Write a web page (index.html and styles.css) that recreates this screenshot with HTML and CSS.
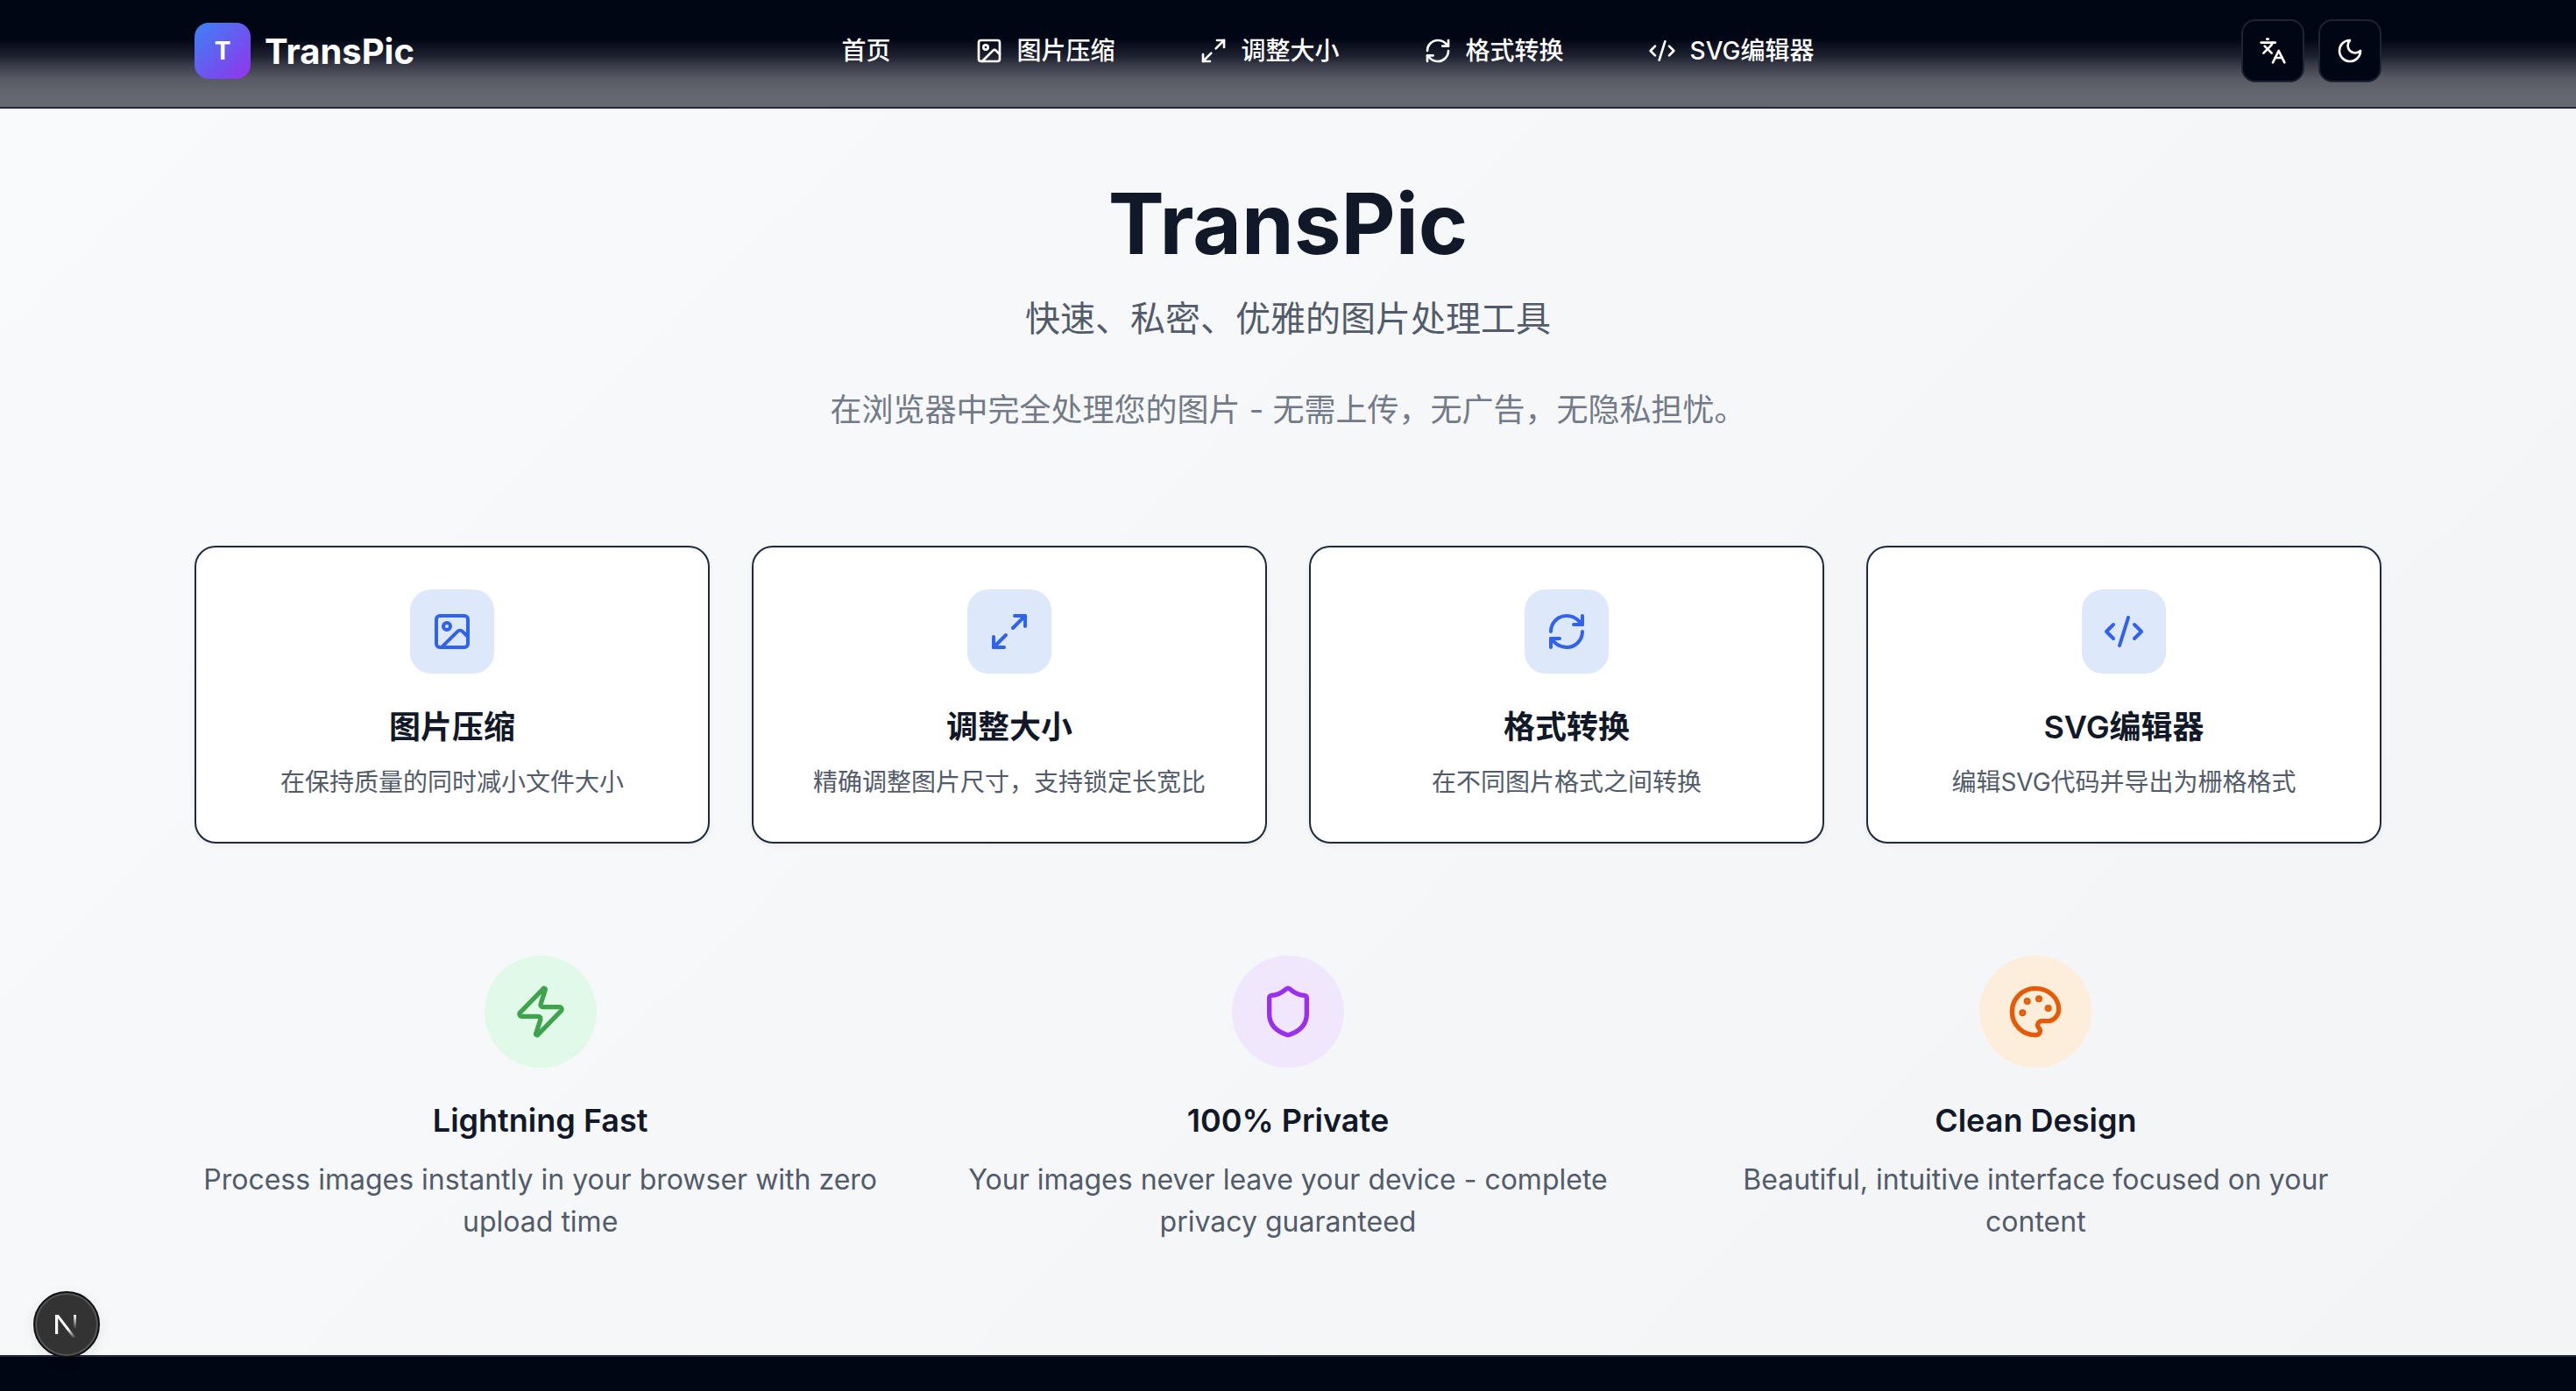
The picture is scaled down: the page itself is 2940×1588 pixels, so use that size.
FILE: index.html
```html
<!DOCTYPE html>
<html lang="zh-CN">
<head>
    <meta charset="UTF-8">
    <meta name="viewport" content="width=device-width, initial-scale=1.0">
    <title>TransPic</title>
    <link rel="stylesheet" href="styles.css">
</head>
<body>
    <header class="site-header">
        <div class="header-inner">
            <a class="brand" href="#">
                <span class="brand-mark">T</span>
                <span class="brand-name">TransPic</span>
            </a>
            <nav class="main-nav">
                <a class="nav-link" href="#">首页</a>
                <a class="nav-link" href="#">
                    <svg class="icon nav-icon" viewBox="0 0 24 24"><rect x="3" y="3" width="18" height="18" rx="2"/><circle cx="9" cy="9" r="2"/><path d="m21 15-3.086-3.086a2 2 0 0 0-2.828 0L6 21"/></svg>
                    图片压缩
                </a>
                <a class="nav-link" href="#">
                    <svg class="icon nav-icon" viewBox="0 0 24 24"><path d="M15 3h6v6"/><path d="m21 3-7 7"/><path d="m3 21 7-7"/><path d="M9 21H3v-6"/></svg>
                    调整大小
                </a>
                <a class="nav-link" href="#">
                    <svg class="icon nav-icon" viewBox="0 0 24 24"><path d="M3 12a9 9 0 0 1 9-9 9.75 9.75 0 0 1 6.74 2.74L21 8"/><path d="M21 3v5h-5"/><path d="M21 12a9 9 0 0 1-9 9 9.75 9.75 0 0 1-6.74-2.74L3 16"/><path d="M8 16H3v5"/></svg>
                    格式转换
                </a>
                <a class="nav-link" href="#">
                    <svg class="icon nav-icon" viewBox="0 0 24 24"><path d="m18 16 4-4-4-4"/><path d="m6 8-4 4 4 4"/><path d="m14.5 4-5 16"/></svg>
                    SVG编辑器
                </a>
            </nav>
            <div class="header-actions">
                <button class="icon-button" type="button">
                    <svg class="icon nav-icon" viewBox="0 0 24 24"><path d="m5 8 6 6"/><path d="m4 14 6-6 2-3"/><path d="M2 5h12"/><path d="M7 2h1"/><path d="m22 22-5-10-5 10"/><path d="M14 18h6"/></svg>
                </button>
                <button class="icon-button" type="button">
                    <svg class="icon nav-icon" viewBox="0 0 24 24"><path d="M12 3a6 6 0 0 0 9 9 9 9 0 1 1-9-9Z"/></svg>
                </button>
            </div>
        </div>
    </header>

    <main class="content">
        <section class="hero">
            <h1>TransPic</h1>
            <p class="hero-tagline">快速、私密、优雅的图片处理工具</p>
            <p class="hero-note">在浏览器中完全处理您的图片 - 无需上传，无广告，无隐私担忧。</p>
        </section>

        <section class="tool-grid">
            <a class="tool-card" href="#">
                <span class="tool-icon">
                    <svg class="icon tool-svg" viewBox="0 0 24 24"><rect x="3" y="3" width="18" height="18" rx="2"/><circle cx="9" cy="9" r="2"/><path d="m21 15-3.086-3.086a2 2 0 0 0-2.828 0L6 21"/></svg>
                </span>
                <h3>图片压缩</h3>
                <p>在保持质量的同时减小文件大小</p>
            </a>
            <a class="tool-card" href="#">
                <span class="tool-icon">
                    <svg class="icon tool-svg" viewBox="0 0 24 24"><path d="M15 3h6v6"/><path d="m21 3-7 7"/><path d="m3 21 7-7"/><path d="M9 21H3v-6"/></svg>
                </span>
                <h3>调整大小</h3>
                <p>精确调整图片尺寸，支持锁定长宽比</p>
            </a>
            <a class="tool-card" href="#">
                <span class="tool-icon">
                    <svg class="icon tool-svg" viewBox="0 0 24 24"><path d="M3 12a9 9 0 0 1 9-9 9.75 9.75 0 0 1 6.74 2.74L21 8"/><path d="M21 3v5h-5"/><path d="M21 12a9 9 0 0 1-9 9 9.75 9.75 0 0 1-6.74-2.74L3 16"/><path d="M8 16H3v5"/></svg>
                </span>
                <h3>格式转换</h3>
                <p>在不同图片格式之间转换</p>
            </a>
            <a class="tool-card" href="#">
                <span class="tool-icon">
                    <svg class="icon tool-svg" viewBox="0 0 24 24"><path d="m18 16 4-4-4-4"/><path d="m6 8-4 4 4 4"/><path d="m14.5 4-5 16"/></svg>
                </span>
                <h3>SVG编辑器</h3>
                <p>编辑SVG代码并导出为栅格格式</p>
            </a>
        </section>

        <section class="feature-grid">
            <div class="feature">
                <span class="feature-icon feature-green">
                    <svg class="icon feature-svg" viewBox="0 0 24 24"><path d="M4 14a1 1 0 0 1-.78-1.63l9.9-10.2a.5.5 0 0 1 .86.46l-1.92 6.02A1 1 0 0 0 13 10h7a1 1 0 0 1 .78 1.63l-9.9 10.2a.5.5 0 0 1-.86-.46l1.92-6.02A1 1 0 0 0 11 14z"/></svg>
                </span>
                <h3>Lightning Fast</h3>
                <p>Process images instantly in your browser with zero upload time</p>
            </div>
            <div class="feature">
                <span class="feature-icon feature-purple">
                    <svg class="icon feature-svg" viewBox="0 0 24 24"><path d="M20 13c0 5-3.5 7.5-7.66 8.95a1 1 0 0 1-.67-.01C7.5 20.5 4 18 4 13V6a1 1 0 0 1 1-1c2 0 4.5-1.2 6.24-2.72a1.17 1.17 0 0 1 1.52 0C14.51 3.81 17 5 19 5a1 1 0 0 1 1 1z"/></svg>
                </span>
                <h3>100% Private</h3>
                <p>Your images never leave your device - complete privacy guaranteed</p>
            </div>
            <div class="feature">
                <span class="feature-icon feature-orange">
                    <svg class="icon feature-svg" viewBox="0 0 24 24"><path d="M12 22a1 1 0 0 1 0-20 10 9 0 0 1 10 9 5 5 0 0 1-5 5h-2.25a1.75 1.75 0 0 0-1.4 2.8l.3.4a1.75 1.75 0 0 1-1.4 2.8z"/><circle class="dot" cx="13.5" cy="6.5" r=".5"/><circle class="dot" cx="17.5" cy="10.5" r=".5"/><circle class="dot" cx="6.5" cy="12.5" r=".5"/><circle class="dot" cx="8.5" cy="7.5" r=".5"/></svg>
                </span>
                <h3>Clean Design</h3>
                <p>Beautiful, intuitive interface focused on your content</p>
            </div>
        </section>
    </main>

    <footer class="site-footer"></footer>

    <!-- dev tools badge -->
    <div class="dev-badge">
        <svg class="dev-logo" viewBox="0 0 40 40">
            <defs>
                <linearGradient id="nSlash" x1="0" y1="0" x2="1" y2="1">
                    <stop offset="0.6" stop-color="#fff"/>
                    <stop offset="1" stop-color="#fff" stop-opacity="0"/>
                </linearGradient>
                <linearGradient id="nBar" x1="0" y1="0" x2="0" y2="1">
                    <stop offset="0" stop-color="#fff"/>
                    <stop offset="0.8" stop-color="#fff" stop-opacity="0"/>
                </linearGradient>
            </defs>
            <path d="M7 9h3.2v22H7z" fill="#fff"/>
            <path d="M7 9h3.8l20 26h-3.8z" fill="url(#nSlash)"/>
            <path d="M28 9h3v20h-3z" fill="url(#nBar)"/>
        </svg>
    </div>
</body>
</html>
```

FILE: styles.css
```css
* {
    box-sizing: border-box;
}

body {
    margin: 0;
    min-height: 100vh;
    display: flex;
    flex-direction: column;
    font-family: Inter, "Noto Sans CJK SC", sans-serif;
    background: linear-gradient(135deg, #f8fafc, #f3f4f6);
    color: #111827;
}

a {
    color: inherit;
    text-decoration: none;
}

h1, h3, p {
    margin: 0;
}

.icon {
    fill: none;
    stroke: currentColor;
    stroke-width: 2;
    stroke-linecap: round;
    stroke-linejoin: round;
    flex-shrink: 0;
}

.icon .dot {
    fill: currentColor;
}

/* header */
.site-header {
    height: 124px;
    border-bottom: 2px solid #232838;
    background: linear-gradient(to bottom, #010615 0, #010615 44px, #1f2230 65px, #383b47 74px, #585b65 90px, #64676f 108px, #676972 122px);
    color: #fff;
}

.header-inner {
    width: 2496px;
    margin: 0 auto;
    padding-top: 22px;
    display: flex;
    justify-content: space-between;
    align-items: center;
}

.brand {
    display: flex;
    align-items: center;
    gap: 16px;
}

.brand-mark {
    width: 64px;
    height: 64px;
    display: flex;
    align-items: center;
    justify-content: center;
    border-radius: 16px;
    background: linear-gradient(135deg, #3b82f6, #9333ea);
    font-size: 28px;
    font-weight: 700;
}

.brand-name {
    font-size: 40px;
    font-weight: 700;
}

.main-nav {
    display: flex;
    align-items: center;
    gap: 96px;
}

.nav-link {
    display: flex;
    align-items: center;
    gap: 16px;
    font-size: 28px;
    font-weight: 500;
    line-height: 40px;
}

.nav-icon {
    width: 32px;
    height: 32px;
}

.header-actions {
    display: flex;
    gap: 16px;
}

.icon-button {
    width: 72px;
    height: 72px;
    display: flex;
    align-items: center;
    justify-content: center;
    padding: 0;
    border: 2px solid #1e2433;
    border-radius: 16px;
    background-color: #010615;
    color: #fff;
}

/* page content */
.content {
    width: 2496px;
    margin: 0 auto;
}

.hero {
    padding-top: 83px;
    text-align: center;
}

.hero h1 {
    font-size: 96px;
    line-height: 96px;
    font-weight: 700;
    color: #111827;
    margin-bottom: 33px;
}

.hero-tagline {
    font-size: 40px;
    line-height: 56px;
    color: #525b6a;
    margin-bottom: 48px;
}

.hero-note {
    font-size: 36px;
    line-height: 56px;
    color: #737a87;
}

.tool-grid {
    display: grid;
    grid-template-columns: repeat(4, 1fr);
    gap: 48px;
    margin-top: 127px;
}

.tool-card {
    display: flex;
    flex-direction: column;
    align-items: center;
    padding: 48px 32px;
    background-color: #fff;
    border: 2px solid #1e293b;
    border-radius: 24px;
    box-shadow: 0 2px 6px rgba(0, 0, 0, 0.06);
}

.tool-icon {
    width: 96px;
    height: 96px;
    display: flex;
    align-items: center;
    justify-content: center;
    border-radius: 24px;
    background-color: #dde8fb;
    color: #2f62f0;
    margin-bottom: 33px;
}

.tool-svg {
    width: 48px;
    height: 48px;
}

.tool-card h3 {
    font-size: 36px;
    line-height: 56px;
    font-weight: 600;
    color: #111827;
    margin-bottom: 15px;
}

.tool-card p {
    font-size: 28px;
    line-height: 40px;
    color: #525b6a;
}

.feature-grid {
    display: grid;
    grid-template-columns: repeat(3, 1fr);
    gap: 64px;
    margin-top: 128px;
}

.feature {
    display: flex;
    flex-direction: column;
    align-items: center;
    padding: 0 8px;
    text-align: center;
}

.feature-icon {
    width: 128px;
    height: 128px;
    display: flex;
    align-items: center;
    justify-content: center;
    border-radius: 50%;
    margin-bottom: 32px;
}

.feature-svg {
    width: 64px;
    height: 64px;
}

.feature-green {
    background-color: #e1f9e8;
    color: #3fa34d;
}

.feature-purple {
    background-color: #f1e7fc;
    color: #9b2ff0;
}

.feature-orange {
    background-color: #fdeedb;
    color: #e65a05;
}

.feature h3 {
    font-size: 36px;
    line-height: 56px;
    font-weight: 600;
    color: #111827;
    margin-bottom: 16px;
}

.feature p {
    font-size: 32px;
    line-height: 48px;
    color: #525b6a;
}

/* footer */
.site-footer {
    margin-top: auto;
    height: 41px;
    border-top: 2px solid #1e293b;
    background-color: #010615;
}

.dev-badge {
    position: fixed;
    left: 38px;
    bottom: 38px;
    width: 76px;
    height: 76px;
    display: flex;
    align-items: center;
    justify-content: center;
    border-radius: 50%;
    background-color: #333;
    border: 2px solid #111;
    box-shadow: inset 0 0 0 2px #555, 0 4px 16px rgba(0, 0, 0, 0.08);
}

.dev-logo {
    width: 40px;
    height: 40px;
}
```
